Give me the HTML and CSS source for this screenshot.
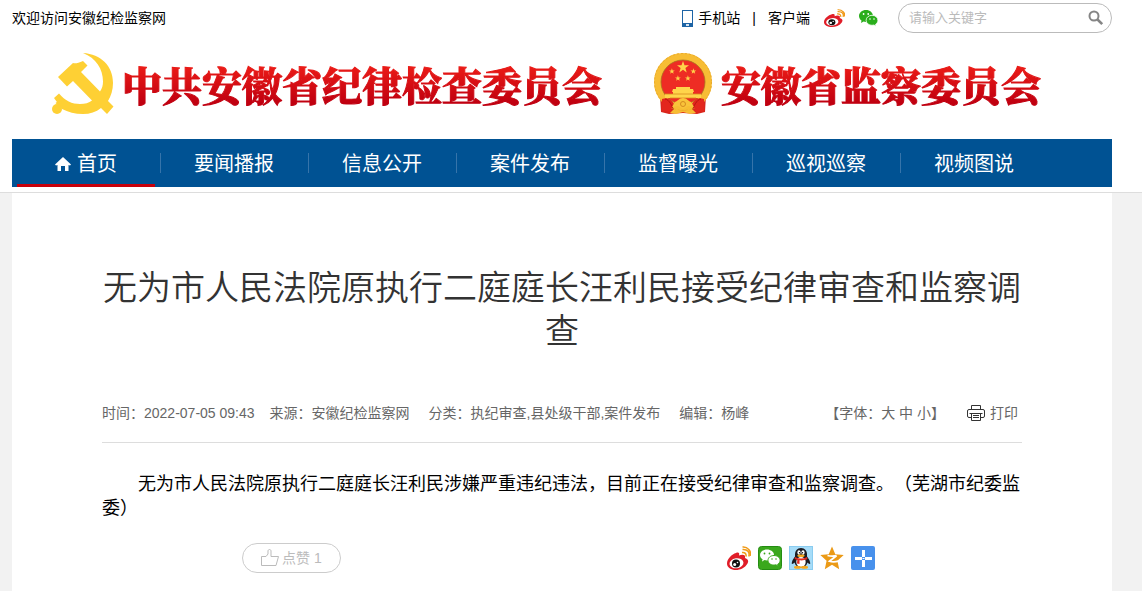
FILE: index.html
```html
<!DOCTYPE html>
<html lang="zh-CN">
<head>
  <meta charset="UTF-8">
  <meta name="viewport" content="width=device-width, initial-scale=1.0">
  <title>无为市人民法院原执行二庭庭长汪利民接受纪律审查和监察调查</title>
  <link rel="stylesheet" href="styles.css">
</head>
<body>
  <header class="header">
    <div class="container">
      <div class="topbar">
        <span class="welcome">欢迎访问安徽纪检监察网</span>
        <div class="top-links">
          <a href="#" class="mobile">
            <svg width="11" height="17" viewBox="0 0 11 17"><rect width="11" height="17" fill="#1d64a5"/><rect x="1" y="1" width="9" height="12" fill="#fff"/><rect x="4" y="14" width="3" height="2" fill="#d5e4f2"/></svg>
            手机站
          </a>
          <span class="divider">|</span>
          <a href="#">客户端</a>
          <a href="#" class="top-icon" aria-label="微博">
            <svg width="21" height="18" viewBox="0 0 24 24" preserveAspectRatio="none"><use href="#weibo"/></svg>
          </a>
          <a href="#" class="top-icon" aria-label="微信">
            <svg width="19" height="17" viewBox="0 0 19 17">
              <path fill="#2aae1c" d="M7 0C3 0 0 2.700 0 6c0 1.900 1 3.500 2.500 4.600L2 13l2.600-1.400c.8.200 1.500.3 2.400.3C11 12 14 9.300 14 6S11 0 7 0z"/>
              <path fill="#2aae1c" stroke="#fff" stroke-width=".8" d="M13 5.300c-3.300 0-5.900 2.200-5.900 5s2.600 5 5.900 5c.7 0 1.400-.1 2-.3l2 1.300-.4-2c1.400-.9 2.300-2.300 2.300-4 0-2.800-2.600-5-5.900-5z"/>
              <g fill="#fff"><circle cx="4.600" cy="4" r=".9"/><circle cx="9.200" cy="4" r=".9"/><circle cx="11" cy="9" r=".8"/><circle cx="15" cy="9" r=".8"/></g>
            </svg>
          </a>
          <form class="search">
            <input type="text" placeholder="请输入关键字" aria-label="请输入关键字">
            <button type="submit" aria-label="搜索">
              <svg width="16" height="16" viewBox="0 0 16 16" fill="none" stroke="#858585"><circle cx="6" cy="6" r="4.500" stroke-width="2"/><path d="M9.500 9.500l4.700 4.700" stroke-width="2.600"/></svg>
            </button>
          </form>
        </div>
      </div>

      <div class="logos">
        <a href="#" class="logo">
          <svg width="62" height="62" viewBox="0 0 62 62" fill="#fed034">
            <path d="M31 0C49 1 61 13 61 30c0 7-2 13-5 18l5.500 5.500L55 61l-6-6c-5 4-11 6-18 6-8 0-15-2-21-5L2 45l5-4.500C13 48 20 51 28 51c5 0 9-1 12-3.500L21 28l-6 5.500L6 24 21 10c2 .6 5 .4 10-2l4.500 4.500L29 19l19 19.500c2-3 3-6 3-10C51 16 44 5 31 0z"/>
            <path d="M7.500 47l4 4-4 3-4-4z"/>
            <circle cx="5" cy="56" r="5"/>
          </svg>
          <span class="logo-text">中共安徽省纪律检查委员会</span>
        </a>
        <a href="#" class="logo">
          <svg width="60" height="62" viewBox="0 0 60 62">
            <path d="M7 42l1 17 8 2 14-1 14 1 8-2 1-17z" fill="#d9251c"/>
            <circle cx="30" cy="29" r="25.500" fill="#ee2c24" stroke="#f7bd34" stroke-width="7"/>
            <circle cx="30" cy="29" r="28.500" fill="none" stroke="#e9a92b" stroke-dasharray="2 2"/>
            <circle cx="30" cy="29" r="22" fill="none" stroke="#a97322" stroke-width=".8"/>
            <g fill="#ffd44a">
              <path id="star" d="M30 8l1.500 4.300h4.500l-3.600 2.700 1.300 4.400-3.700-2.600-3.700 2.600 1.300-4.400-3.600-2.700h4.500z"/>
              <use href="#star" transform="translate(4.500 11.500) scale(.48)"/>
              <use href="#star" transform="translate(26 11.500) scale(.48)"/>
              <use href="#star" transform="translate(10.500 18.500) scale(.48)"/>
              <use href="#star" transform="translate(20.500 18.500) scale(.48)"/>
              <path d="M23 34h14v2h3l1 3h-22l1-3h3z"/>
              <path d="M20 39h20v2h8v4H12v-4h8z"/>
            </g>
            <path d="M12 41h36M17 45h26" stroke="#d58c20" stroke-width=".8"/>
            <path d="M9 46c6-2 9 0 12 5l-4 8-8-1zM51 46c-6-2-9 0-12 5l4 8 8-1z" fill="#e3261d"/>
            <path d="M12 46c4 0 8 8 9 13M48 46c-4 0-8 8-9 13" fill="none" stroke="#b5140f"/>
            <path d="M22 49c3-1 4-4 8-4s5 3 8 4l3 5-6-1-5 3-5-3-6 1z" fill="#f9c43a"/>
            <path d="M17 60l4-4 9 2 9-2 4 4-6 1-7-2-7 2z" fill="#f7bd34"/>
            <circle cx="30" cy="51" r="2.500" fill="none" stroke="#d58c20"/>
          </svg>
          <span class="logo-text">安徽省监察委员会</span>
        </a>
      </div>

      <nav class="nav">
        <a href="#" class="active">
          <svg width="16" height="14" viewBox="0 0 16 14" fill="#fff"><path d="M8 0l8 7.500-1 1-1.500-.5v6H10v-5H6v5H2.500V8L1 8.500l-1-1z"/></svg>
          首页
        </a>
        <a href="#">要闻播报</a>
        <a href="#">信息公开</a>
        <a href="#">案件发布</a>
        <a href="#">监督曝光</a>
        <a href="#">巡视巡察</a>
        <a href="#">视频图说</a>
      </nav>
    </div>
  </header>

  <main class="container">
    <article class="article">
      <h1>无为市人民法院原执行二庭庭长汪利民接受纪律审查和监察调查</h1>
      <div class="meta">
        <span class="time">时间：2022-07-05 09:43</span>
        <span>来源：安徽纪检监察网</span>
        <span>分类：执纪审查,县处级干部,案件发布</span>
        <span>编辑：杨峰</span>
        <div class="tools">
          <span>【字体：<button type="button">大</button> <button type="button">中</button> <button type="button">小</button>】</span>
          <button type="button" class="print">
            <svg width="18" height="16" viewBox="0 0 18 16" fill="none" stroke="#333"><path d="M4.500 4.500v-4h9v4M4.500 12.500H2A1.500 1.500 0 0 1 .5 11V6A1.500 1.500 0 0 1 2 4.500h14A1.500 1.500 0 0 1 17.500 6v5a1.500 1.500 0 0 1-1.500 1.500h-2.500M4.500 8.500h9v7h-9zM6 10.500h6M6 12.500h6M2.500 8.500h13"/></svg>
            打印
          </button>
        </div>
      </div>
      <p class="content">无为市人民法院原执行二庭庭长汪利民涉嫌严重违纪违法，目前正在接受纪律审查和监察调查。（芜湖市纪委监委）</p>
      <div class="actions">
        <button type="button" class="like">
          <svg width="18" height="18" viewBox="0 0 18 18" fill="none" stroke="#bbb"><path d="M.5 7.500H5l2-2.500V2c0-2 3-2 3 0v5.500h7.500l-2.500 9H.5z"/></svg>
          点赞 1
        </button>
        <div class="share">
          <a href="#" aria-label="微博">
            <svg width="24" height="24" viewBox="0 0 24 24">
              <g id="weibo">
                <path fill="#e01d28" d="M9 7c2-1 4-.500 3 2.500 4-1.500 7-.500 6 2.500 3 1 4 3 2.500 5.500C18 22 13 24 9 24c-5 0-9-2.500-9-6.500C0 13 5 8 9 7z"/>
                <ellipse cx="9.500" cy="17.200" rx="7" ry="5" fill="#fff" transform="rotate(-8 9.500 17.200)"/>
                <circle cx="9" cy="17.500" r="4" fill="#111"/>
                <circle cx="7.700" cy="18.500" r="1.500" fill="#fff"/><circle cx="10.500" cy="16.500" r=".8" fill="#fff"/>
                <path d="M15 6.500c3-.5 4.500 1.500 4 4M15.500 3.500c5-.5 7.500 3 6.300 7M15.500 1c5-.6 9 4 8 9" fill="none" stroke="#f09a18" stroke-width="1.500"/>
              </g>
            </svg>
          </a>
          <a href="#" aria-label="微信">
            <svg width="24" height="24" viewBox="0 0 24 24">
              <rect x=".5" y=".5" width="23" height="23" rx="3" fill="#3aa81d" stroke="#248c12"/>
              <path d="M9 3.500c-3.900 0-7 2.400-7 5.500 0 1.800 1 3.300 2.600 4.300L4 15.500l2.500-1.400c.8.300 1.600.4 2.500.4 3.900 0 7-2.400 7-5.500s-3.100-5.500-7-5.500z" fill="#fff"/>
              <path d="M16 9.500c-3.400 0-6 2.100-6 4.800s2.600 4.800 6 4.800c.7 0 1.400-.1 2-.3l2.200 1.400-.5-2c1.500-.9 2.400-2.300 2.400-3.900 0-2.700-2.700-4.800-6.100-4.800z" fill="#fff" stroke="#3aa81d"/>
              <g fill="#3aa81d"><circle cx="6.500" cy="7.500" r=".9"/><circle cx="11.500" cy="7.500" r=".9"/><circle cx="14" cy="13" r=".8"/><circle cx="18" cy="13" r=".8"/></g>
            </svg>
          </a>
          <a href="#" aria-label="QQ">
            <svg width="24" height="24" viewBox="0 0 24 24">
              <rect x=".5" y=".5" width="23" height="23" fill="#a6dcf8" stroke="#8accf0"/>
              <path d="M12 2C8 2 6 5 6 8.500v2C4 13 2.500 15.500 2.800 18c1 .3 2-1 2.700-1.500C6.500 20 9 21.500 12 21.500s5.500-1.500 6.500-5c.5.500 1.700 1.800 2.700 1.500.3-2.500-1.200-5-3.200-7.500v-2C18 5 16 2 12 2z" fill="#1b1b22"/>
              <ellipse cx="12" cy="16" rx="4.700" ry="5" fill="#fff"/>
              <ellipse cx="10" cy="6.500" rx="1.600" ry="2.200" fill="#fff"/><ellipse cx="14" cy="6.500" rx="1.600" ry="2.200" fill="#fff"/>
              <circle cx="10.500" cy="6.800" r=".7"/><circle cx="13.500" cy="6.800" r=".7"/>
              <ellipse cx="12" cy="9.800" rx="3.700" ry="1.300" fill="#f6a81c"/>
              <path d="M6 11c4 2 8 2 12 0l.5 2c-2.500 1.300-5.500 1.600-8 1.300V18l-2.500-.5.300-3.600L5.500 13z" fill="#e12b22"/>
              <ellipse cx="8.500" cy="21.200" rx="3.500" ry="1.500" fill="#f6a81c"/><ellipse cx="15.500" cy="21.200" rx="3.500" ry="1.500" fill="#f6a81c"/>
            </svg>
          </a>
          <a href="#" aria-label="QQ空间">
            <svg width="24" height="24" viewBox="0 0 24 24">
              <path d="M12 .5l3.300 7.800 8.400.8-6.300 5.600 1.800 8.500L12 18.800l-7.200 4.400 1.800-8.500L.3 9.100l8.400-.8z" fill="#eb9a16"/>
              <path d="M7.500 9.500c3 .8 6 .8 9 .2l-7 5.500c2.500.8 5.500.8 9 0" fill="none" stroke="#fff" stroke-width="1.800"/>
            </svg>
          </a>
          <a href="#" aria-label="更多">
            <svg width="24" height="24" viewBox="0 0 24 24"><rect width="24" height="24" rx="2" fill="#4891ec"/><path d="M12.500 4v7M12.500 14v7M4 12.500h7M14 12.500h7" stroke="#fff" stroke-width="3"/><path d="M11.500 12.500h2" stroke="#fff"/></svg>
          </a>
        </div>
      </div>
    </article>
  </main>
</body>
</html>
```

FILE: styles.css
```css
* {
  margin: 0;
  padding: 0;
  box-sizing: border-box;
}

body {
  min-height: 100vh;
  display: flex;
  flex-direction: column;
  background: #f2f2f2;
  font-family: "Liberation Sans", "Noto Sans CJK SC", sans-serif;
  font-size: 14px;
  line-height: 20px;
  color: #000;
  text-spacing-trim: space-all;
}

a {
  color: inherit;
  text-decoration: none;
}

button {
  border: 0;
  background: none;
  font: inherit;
  color: inherit;
  cursor: pointer;
}

svg {
  flex: none;
  display: block;
}

.header,
main {
  padding: 0 30px 0 12px;
}

.header {
  background: #fff;
  border-bottom: 1px solid #ddd;
  padding-bottom: 5px;
}

.topbar {
  display: flex;
  justify-content: space-between;
  align-items: center;
  padding-top: 3px;
}

.top-links {
  display: flex;
  align-items: center;
}

.mobile {
  display: flex;
  align-items: center;
  gap: 5px;
}

.divider {
  margin: 0 12px;
}

.top-icon {
  margin-left: 14px;
}

.search {
  display: flex;
  align-items: center;
  width: 214px;
  height: 30px;
  margin-left: 20px;
  padding: 0 7px 0 10px;
  border: 1px solid #bbb;
  border-radius: 15px;
}

.search input {
  flex: 1;
  min-width: 0;
  border: 0;
  outline: 0;
  background: none;
  font: inherit;
  font-size: 13px;
}

.search input::placeholder {
  color: #bbb;
}

.logos {
  display: flex;
  gap: 51px;
  padding: 20px 40px 24px;
}

.logo {
  display: flex;
  align-items: center;
  gap: 8px;
}

.logo-text {
  font-family: "Noto Serif CJK SC", "Noto Sans CJK SC", serif;
  font-size: 40px;
  font-weight: 900;
  line-height: 62px;
  white-space: nowrap;
  background: linear-gradient(#ec1c17 20%, #c00010 80%);
  -webkit-background-clip: text;
  -webkit-text-fill-color: transparent;
  -webkit-text-stroke: 1px transparent;
}

.nav {
  display: flex;
  height: 48px;
  background: #005293;
  color: #fff;
  font-size: 20px;
}

.nav a {
  position: relative;
  display: flex;
  justify-content: center;
  align-items: center;
  gap: 6px;
  width: 148px;
  padding-top: 2px;
}

.nav a + a::before {
  content: '';
  position: absolute;
  left: 0;
  top: 14px;
  width: 1px;
  height: 20px;
  background: #3674aa;
}

.nav .active::after {
  content: '';
  position: absolute;
  left: 5px;
  right: 5px;
  bottom: 0;
  height: 3px;
  background: #c7000b;
}

main {
  flex: 1;
  display: flex;
}

.article {
  flex: 1;
  padding: 74px 90px 18px;
  background: #fff;
}

.article h1 {
  font-size: 34px;
  font-weight: 350;
  line-height: 43px;
  text-align: center;
  color: #333;
}

.meta {
  display: flex;
  align-items: center;
  gap: 19px;
  margin-top: 40px;
  padding: 10px 4px 19px 0;
  border-bottom: 1px solid #ddd;
  color: #666;
}

.meta .time {
  margin-right: -4px;
}

.tools {
  display: flex;
  align-items: center;
  gap: 22px;
  margin-left: auto;
}

.print {
  display: flex;
  align-items: center;
  gap: 5px;
}

.content {
  margin-top: 29px;
  font-size: 18px;
  line-height: 24px;
  text-indent: 2em;
}

.actions {
  display: flex;
  justify-content: space-between;
  align-items: center;
  margin-top: 23px;
  padding: 0 147px 0 140px;
}

.like {
  display: flex;
  align-items: center;
  gap: 3px;
  height: 30px;
  padding: 0 18px;
  border: 1px solid #ccc;
  border-radius: 15px;
  color: #bbb;
}

.share {
  display: flex;
  gap: 7px;
}
```
